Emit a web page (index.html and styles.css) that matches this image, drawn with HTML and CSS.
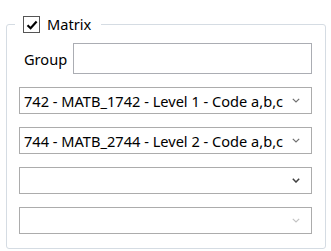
FILE: index.html
```html
<!DOCTYPE html>
<html lang="en">
<head>
  <meta charset="UTF-8">
  <title>Matrix</title>
  <link rel="stylesheet" href="styles.css">
</head>
<body>
  <fieldset class="matrix-box">
    <legend class="matrix-legend">
      <span class="check">
        <svg width="14" height="14" viewBox="0 0 14 14"><path d="M2.5 7.2 L5.6 10.2 L11.6 3.6" fill="none" stroke="#000" stroke-width="2.2"/></svg>
      </span>
      <span class="legend-text">Matrix</span>
    </legend>

    <div class="group-row">
      <label class="group-label">Group</label>
      <div class="textbox"></div>
    </div>

    <div class="combo">
      <span class="combo-text">742 - MATB_1742 - Level 1 - Code a,b,c</span>
      <svg class="chev" width="8" height="5" viewBox="0 0 8 5"><path d="M0.8 0.8 L4 4 L7.2 0.8" fill="none" stroke="#707070" stroke-width="1.2"/></svg>
    </div>
    <div class="combo">
      <span class="combo-text">744 - MATB_2744 - Level 2 - Code a,b,c</span>
      <svg class="chev" width="8" height="5" viewBox="0 0 8 5"><path d="M0.8 0.8 L4 4 L7.2 0.8" fill="none" stroke="#707070" stroke-width="1.2"/></svg>
    </div>
    <div class="combo">
      <span class="combo-text"></span>
      <svg class="chev" width="8" height="5" viewBox="0 0 8 5"><path d="M0.8 0.8 L4 4 L7.2 0.8" fill="none" stroke="#404040" stroke-width="1.5"/></svg>
    </div>
    <div class="combo disabled">
      <span class="combo-text"></span>
      <svg class="chev" width="8" height="5" viewBox="0 0 8 5"><path d="M0.8 0.8 L4 4 L7.2 0.8" fill="none" stroke="#c4c4c4" stroke-width="1.2"/></svg>
    </div>
  </fieldset>
</body>
</html>
```

FILE: styles.css
```css
body {
  margin: 0;
  width: 331px;
  height: 251px;
  background: #fff;
  font-family: "Noto Sans", "Open Sans", sans-serif;
  font-size: 14.6px;
  color: #000;
  overflow: hidden;
}

.matrix-box {
  margin: 16px 0 0 6px;
  width: 320px;
  height: 233px;
  box-sizing: border-box;
  border: 1px solid #d5dce3;
  border-radius: 3px;
  padding: 10px 13px 0 12px;
}

.matrix-legend {
  padding: 0 10px 0 8px;
  margin-left: -4px;
  display: flex;
  align-items: center;
  gap: 7px;
  height: 17px;
}

.check {
  width: 15px;
  height: 15px;
  border: 1px solid #555;
  display: flex;
  align-items: center;
  justify-content: center;
  background: #fff;
}

.legend-text {
  line-height: 17px;
}

.group-row {
  display: flex;
  align-items: center;
  height: 31px;
}

.group-label {
  width: 54px;
  padding-left: 5px;
  box-sizing: border-box;
}

.textbox {
  flex: 1;
  height: 31px;
  box-sizing: border-box;
  border: 1px solid #abadb3;
}

.combo {
  display: flex;
  align-items: center;
  height: 27px;
  box-sizing: border-box;
  border: 1px solid #acacac;
  margin-top: 13px;
  padding: 0 11px 0 4px;
}

.combo-text {
  flex: 1;
  white-space: nowrap;
  overflow: hidden;
}

.chev {
  flex: none;
  margin-left: 4px;
}
```
